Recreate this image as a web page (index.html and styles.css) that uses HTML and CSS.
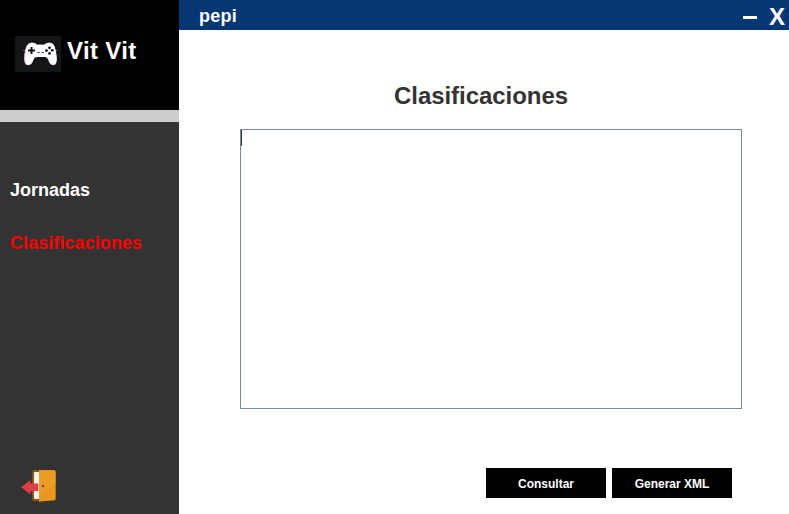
FILE: index.html
```html
<!DOCTYPE html>
<html lang="es">
<head>
<meta charset="utf-8">
<title>Vit Vit</title>
<link rel="stylesheet" href="styles.css">
</head>
<body>
<div class="window">
  <aside class="sidebar">
    <div class="brand">
      <svg class="logo" width="46" height="36" viewBox="0 0 46 36">
        <rect width="46" height="36" fill="#141516"/>
        <path d="M7.500 14.500h4M8.800 18h2M39 14.500h3.500M40 22h2" stroke="#7d5582" stroke-width=".8"/>
        <path d="M14.500 7.200C17.500 6.200 20.500 7 22 8.700H29.500C31 7 34 6.200 36.500 7.200C39.500 8.300 40.300 12 41 16C41.700 20 42.600 25.500 40.700 28.200C39 30 36 29.300 34.700 27C33.500 24.800 33.200 22.500 31.500 21.400C30 20.900 22 20.900 20.300 21.400C18.500 22.500 18.200 24.800 17 27C15.700 29.300 12.200 30 10.500 28.200C8.500 25.500 9 20 9.800 16C10.500 12 11.500 8.300 14.500 7.200Z" fill="#eeb9e6"/>
        <path d="M15 7.200C18 6.200 20.500 7 22 8.700H29.500C31 7 34 6.200 36.300 7.200C39.300 8.300 40.100 12 40.800 16C41.500 20 42.200 25 40.500 27.600C38.800 29.200 36 28.800 34.700 26.500C33.500 24.500 33.200 22 31.500 21H20.300C18.500 22 18.200 24.500 17 26.500C15.700 28.600 13 29 11.300 27.400C9.800 25 10 20 10.700 16C11.400 12 12.200 8.300 15 7.200Z" fill="#fff"/>
        <path d="M16.500 11v7M13 14.500h7" stroke="#151515" stroke-width="2"/>
        <path d="M22.500 16.500h2M26.700 16.500h2" stroke="#333" stroke-width="1"/>
        <g fill="#171717"><circle cx="34.500" cy="11.800" r="1.400"/><circle cx="31.500" cy="14.600" r="1.400"/><circle cx="37.300" cy="14.300" r="1.400"/><circle cx="34.500" cy="17.400" r="1.400"/></g>
      </svg>
      <span class="brand-name">Vit Vit</span>
    </div>
    <nav class="menu">
      <a class="item">Jornadas</a>
      <a class="item active">Clasificaciones</a>
    </nav>
    <svg class="exit" width="36" height="34" viewBox="0 0 36 34">
      <rect x="11" y="1" width="24" height="31" rx="2.500" fill="#80550f"/>
      <rect x="13" y="3" width="7" height="27" rx="1" fill="#f1f1f4"/>
      <path d="M18 1.300H33Q34.500 1.300 34.500 3V29.500Q34.500 31 33 31.100L18 32.700Z" fill="#e9981f"/>
      <path d="M18 1.300H33Q34.500 1.300 34.500 3V16L18 28Z" fill="#eda02a" opacity=".55"/>
      <circle cx="22" cy="17" r="1.200" fill="#754914"/>
      <path d="M0 18.200L9.500 11V14.600H17.300V22H9.500V25.200Z" fill="#e13d46"/>
    </svg>
  </aside>
  <main class="main">
    <header class="titlebar">
      <span class="user">pepi</span>
      <span class="minimize"></span>
      <span class="close">X</span>
    </header>
    <h1 class="heading">Clasificaciones</h1>
    <div class="output"><span class="caret"></span></div>
    <div class="actions">
      <button class="button">Consultar</button>
      <button class="button">Generar XML</button>
    </div>
  </main>
</div>
</body>
</html>
```

FILE: styles.css
```css
* { box-sizing: border-box; }
body { margin: 0; background: #fff; font-family: "Liberation Sans", Arial, sans-serif; font-weight: bold; }
.window { display: flex; width: 789px; height: 514px; overflow: hidden; }
.sidebar { display: flex; flex-direction: column; width: 179px; background: #333; }
.brand { display: flex; align-items: flex-start; height: 122px; padding: 36px 0 0 15px; background: #000; border-bottom: 12px solid #ccc; }
.logo { display: block; }
.brand-name { margin-left: 6px; font-size: 24px; line-height: 30px; letter-spacing: .35px; color: #fff; }
.menu { display: flex; flex-direction: column; gap: 33px; padding: 58px 0 0 10px; }
.item { font-size: 18px; line-height: 20px; color: #fff; }
.active { letter-spacing: .07px; color: #f00; }
.exit { display: block; margin: auto 0 11px 21px; }
.main { display: flex; flex-direction: column; flex: 1; }
.titlebar { display: flex; align-items: center; height: 30px; padding: 0 4px 0 20px; background: #053775; color: #fff; }
.user { flex: 1; padding-top: 2px; font-size: 18px; line-height: 30px; letter-spacing: .25px; }
.minimize { width: 14px; height: 3px; margin: 4px 12px 0 0; background: #fff; }
.close { font-size: 24px; line-height: 30px; padding-top: 3px; }
.heading { margin: 51px 0 0 215px; font-size: 24px; line-height: 30px; letter-spacing: -.05px; color: #333; }
.output { width: 502px; height: 280px; margin: 18px 0 0 61px; border: 1px solid #7a8a99; }
.caret { display: block; width: 1px; height: 16px; background: #333; }
.actions { display: flex; gap: 6px; margin: 59px 0 0 307px; }
.button { width: 120px; height: 30px; padding: 2px 0 0; border: 0; background: #000; color: #fff; font: bold 12px "Liberation Sans", Arial, sans-serif; }
```
